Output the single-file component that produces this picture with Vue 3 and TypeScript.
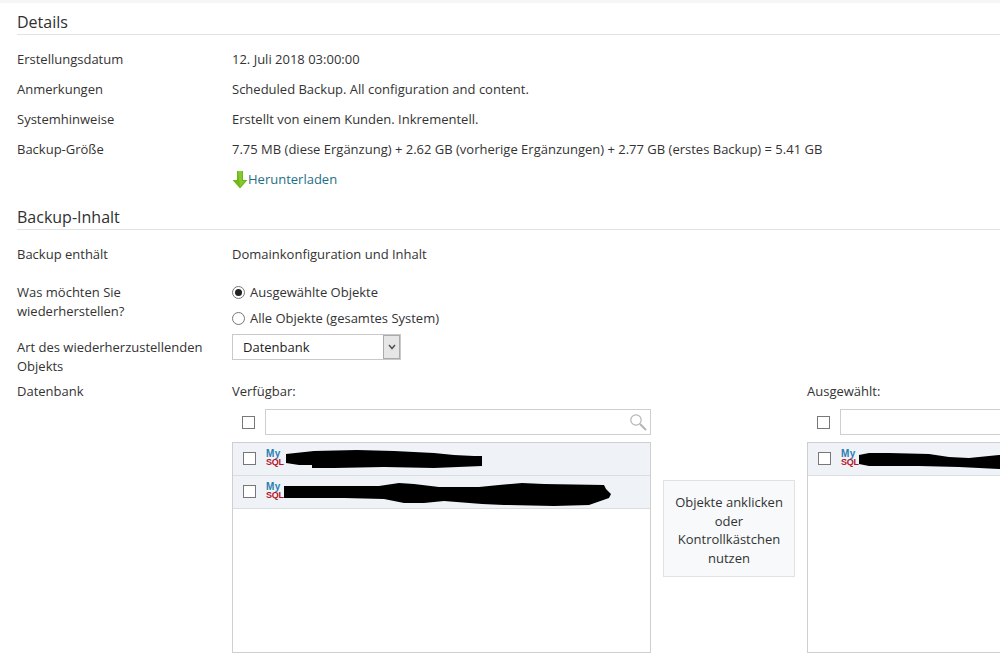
<script setup lang="ts">
interface Row { label: string; value: string }
const details: Row[] = [
  { label: 'Erstellungsdatum', value: '12. Juli 2018 03:00:00' },
  { label: 'Anmerkungen', value: 'Scheduled Backup. All configuration and content.' },
  { label: 'Systemhinweise', value: 'Erstellt von einem Kunden. Inkrementell.' },
  { label: 'Backup-Größe', value: '7.75 MB (diese Ergänzung) + 2.62 GB (vorherige Ergänzungen) + 2.77 GB (erstes Backup) = 5.41 GB' },
]
const blobA = 'M2 4 L30 1 L73 0 L110 1 L150 3 L170 5 L190 6 L198 6 L198 16 L150 18 L100 17 L50 18 L28 18 L28 15 L15 15 L2 13 Z'
const blobB = 'M0 4 L60 4 L95 4 L115 1 L130 2 L155 5 L195 5 L215 3 L238 1 L260 2 L320 3 L322 7 L327 12 L325 16 L305 23 L270 24 L220 23 L198 22 L160 19 L140 21 L120 21 L100 17 L60 16 L0 16 Z'
const blobC = 'M0 5 L10 3 L30 3 L70 4 L90 7 L110 8 L140 5 L180 3 L240 6 L240 16 L190 21 L140 19 L100 17 L60 16 L30 16 L10 16 L0 14 Z'
</script>

<template>
  <div class="page">
    <div class="topline"></div>
    <section class="details">
      <h2 class="heading">Details</h2>
      <div v-for="r in details" :key="r.label" class="row">
        <div class="label">{{ r.label }}</div>
        <div class="value">{{ r.value }}</div>
      </div>
      <div class="row">
        <div class="label"></div>
        <div class="value download">
          <svg class="arrow" width="16" height="18" viewBox="0 0 16 18">
            <path d="M5 0 H11 V9 H15.5 L8 17.5 L0.5 9 H5 Z" fill="#6fb61c" />
            <path d="M6 0 H10 V10 H13 L8 16 Z" fill="#85c92c" />
          </svg>
          <a class="link">Herunterladen</a>
        </div>
      </div>
    </section>

    <section class="content">
      <h2 class="heading">Backup-Inhalt</h2>
      <div class="row first">
        <div class="label">Backup enthält</div>
        <div class="value">Domainkonfiguration und Inhalt</div>
      </div>
      <div class="row restore">
        <div class="label wrap">Was möchten Sie wiederherstellen?</div>
        <div class="radios">
          <label class="radio-line"><span class="radio on"></span>Ausgewählte Objekte</label>
          <label class="radio-line"><span class="radio"></span>Alle Objekte (gesamtes System)</label>
        </div>
      </div>
      <div class="row kind">
        <div class="label wrap">Art des wiederherzustellenden Objekts</div>
        <div class="select">
          <span class="select-text">Datenbank</span>
          <span class="select-btn">
            <svg width="8" height="6" viewBox="0 0 8 6"><path d="M1 1 L4 4.5 L7 1" fill="none" stroke="#555" stroke-width="1.6" /></svg>
          </span>
        </div>
      </div>
      <div class="row db">
        <div class="label">Datenbank</div>
        <div class="dual">
          <div class="col">
            <div class="col-title">Verfügbar:</div>
            <div class="search-line">
              <span class="check"></span>
              <div class="search">
                <svg width="18" height="18" viewBox="0 0 18 18" class="lens">
                  <circle cx="7" cy="7" r="5.2" fill="none" stroke="#b5b5b5" stroke-width="1.2" />
                  <path d="M11 11 L17 17" stroke="#b5b5b5" stroke-width="2" />
                </svg>
              </div>
            </div>
            <div class="list">
              <div class="item">
                <span class="check"></span>
                <span class="mysql"><b class="my">My</b><b class="sql">SQL</b></span>
                <svg class="blob" width="198" height="19" viewBox="0 0 198 19"><path :d="blobA" fill="#000" /></svg>
              </div>
              <div class="item">
                <span class="check"></span>
                <span class="mysql"><b class="my">My</b><b class="sql">SQL</b></span>
                <svg class="blob low" width="327" height="25" viewBox="0 0 327 25"><path :d="blobB" fill="#000" /></svg>
              </div>
            </div>
          </div>
          <div class="hint-wrap">
            <div class="hint">Objekte anklicken oder Kontrollkästchen nutzen</div>
          </div>
          <div class="col">
            <div class="col-title">Ausgewählt:</div>
            <div class="search-line">
              <span class="check"></span>
              <div class="search"></div>
            </div>
            <div class="list">
              <div class="item">
                <span class="check"></span>
                <span class="mysql"><b class="my">My</b><b class="sql">SQL</b></span>
                <svg class="blob" width="240" height="22" viewBox="0 -2 240 22"><path :d="blobC" fill="#000" /></svg>
              </div>
            </div>
          </div>
        </div>
      </div>
    </section>
  </div>
</template>

<style>
html, body { margin: 0; background: #fff; overflow: hidden; }
</style>

<style scoped>
.page {
  width: 1000px;
  height: 659px;
  overflow: hidden;
  font-family: "Open Sans", sans-serif;
  font-size: 13px;
  color: #333;
  box-sizing: border-box;
  padding-left: 17px;
  position: relative;
}
.topline {
  height: 3px;
  margin-left: -17px;
  background: #f6f6f6;
}
.heading {
  margin: 0;
  font-size: 16px;
  font-weight: 400;
  line-height: 22px;
  padding: 8px 0 1px;
  color: #303030;
  border-bottom: 1px solid #e1e4e6;
  width: 1000px;
}
.details .heading { margin-bottom: 9px; }
.row {
  display: flex;
  height: 30px;
  line-height: 30px;
}
.label { width: 215px; flex: none; }
.wrap { line-height: 19px; width: 195px; margin-right: 20px; }
.value { white-space: nowrap; }
.download { display: flex; align-items: center; }
.arrow { margin-right: 0; margin-top: 1px; }
.link { color: #1e6f86; }
.content { margin-top: 5px; }
.content .heading { padding-top: 7px; }
.row.first { margin-top: 9px; }
.row.restore { height: 53px; margin-top: 14px; line-height: 19px; }
.radios { display: flex; flex-direction: column; gap: 7px; }
.radio-line { display: flex; align-items: center; height: 19px; }
.radio {
  width: 11px;
  height: 11px;
  border: 1px solid #777;
  border-radius: 50%;
  margin-right: 5px;
  background: #fff;
  position: relative;
}
.radio.on::after {
  content: "";
  position: absolute;
  left: 2px;
  top: 2px;
  width: 7px;
  height: 7px;
  border-radius: 50%;
  background: #222;
}
.row.kind { height: 48px; line-height: 19px; margin-top: -2px; }
.row.kind .wrap { padding-top: 4px; }
.select {
  width: 167px;
  height: 24px;
  border: 1px solid #c9c9c9;
  display: flex;
  justify-content: space-between;
  align-items: center;
  box-sizing: content-box;
  background: #fff;
}
.select-text { padding-left: 10px; color: #222; }
.select-btn {
  width: 15px;
  height: 22px;
  border: 1px solid #aaa;
  background: #e6e6e6;
  display: flex;
  align-items: center;
  justify-content: center;
}
.row.db { height: auto; line-height: 19px; }
.dual { display: flex; flex: none; }
.col { width: 419px; flex: none; }
.col-title { height: 27px; line-height: 19px; }
.search-line {
  display: flex;
  align-items: center;
  height: 26px;
  padding-left: 10px;
  margin-bottom: 7px;
}
.check {
  width: 11px;
  height: 11px;
  border: 1px solid #777;
  background: #fff;
  flex: none;
}
.search {
  margin-left: 10px;
  flex: 1;
  height: 24px;
  border: 1px solid #cfcfcf;
  display: flex;
  justify-content: flex-end;
  align-items: center;
  padding-right: 3px;
}
.lens { display: block; }
.list {
  height: 209px;
  border: 1px solid #cfcfcf;
  background: #fff;
}
.item {
  height: 32px;
  box-sizing: content-box;
  border-bottom: 1px solid #d9dde0;
  background: #eff2f6;
  display: flex;
  align-items: center;
  padding-left: 10px;
}
.item .check { margin-top: -1px; }
.mysql {
  display: flex;
  flex-direction: column;
  width: 17px;
  margin-left: 10px;
  margin-top: -2px;
  font-family: "Liberation Sans", sans-serif;
  flex: none;
}
.my, .sql {
  display: block;
  font-weight: 700;
  white-space: nowrap;
}
.my {
  color: #2a7fb0;
  font-size: 10px;
  height: 8px;
  line-height: 8px;
  letter-spacing: 0.3px;
}
.sql {
  color: #b5122a;
  font-size: 9px;
  height: 9px;
  line-height: 9px;
  letter-spacing: -0.3px;
}
.blob { display: block; margin-left: 1px; flex: none; }
.blob.low { margin-top: 5px; }
.hint-wrap {
  width: 156px;
  flex: none;
  display: flex;
  justify-content: center;
  padding-top: 98px;
}
.hint {
  width: 132px;
  height: 97px;
  box-sizing: border-box;
  border: 1px solid #dfe3e6;
  background: #f7f9fb;
  text-align: center;
  padding: 12px 8px;
  line-height: 18.5px;
}
</style>
